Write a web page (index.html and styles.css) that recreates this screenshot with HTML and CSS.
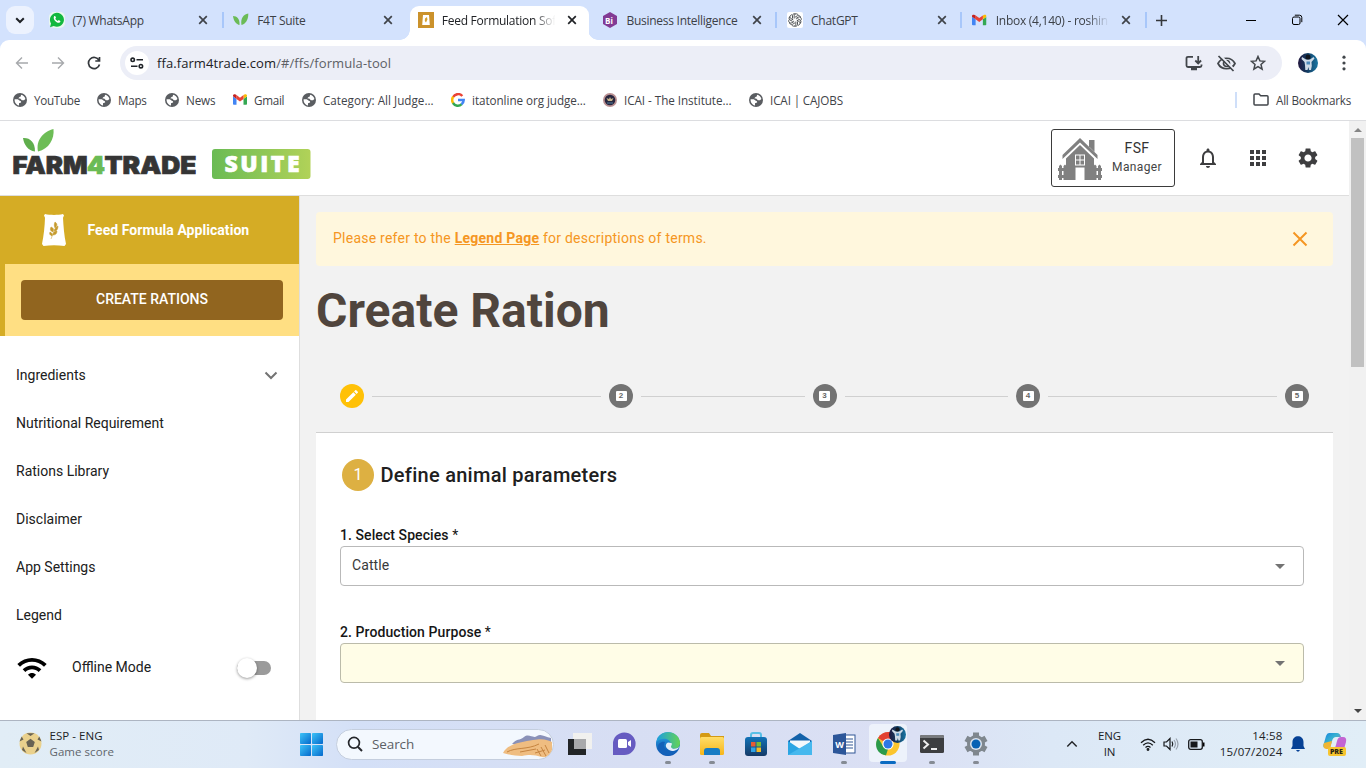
FILE: index.html
```html
<!DOCTYPE html>
<html lang="en">
<head>
<meta charset="utf-8">
<title>Feed Formulation Software</title>
<link rel="stylesheet" href="styles.css">
</head>
<body>
<svg class="defs" aria-hidden="true">
  <defs>
    <symbol id="x" viewBox="0 0 10 10"><path d="M1.200 1.200l7.600 7.600M8.800 1.200L1.200 8.800" fill="none" stroke="currentColor" stroke-width="1.700"/></symbol>
    <symbol id="globe" viewBox="0 0 14 14"><circle cx="7" cy="7" r="7" fill="#5a5d61"/><path d="M1.600 6.300h3.200l2 1.500c1 .2 1.500.8 1.300 1.700L6 10.300v2.200C3.200 12 1.400 9.500 1.600 6.300zM8 1.700c2.300.4 4 2 4.400 4.300L11 7.300H8.800L7.500 5.800 5.300 5.200 6.500 4l1.300-.5z" fill="#fff"/></symbol>
    <symbol id="gmail" viewBox="0 0 16 12"><path d="M1.200 12H4V5.300L0 2.300v8.500C0 11.500.5 12 1.200 12z" fill="#4285f4"/><path d="M12 12h2.800c.7 0 1.200-.5 1.200-1.200V2.300l-4 3z" fill="#34a853"/><path d="M12 .9v4.400l4-3v-.6C16 .2 14.300-.5 13.100.4z" fill="#fbbc04"/><path d="M4 5.300V.9l4 3 4-3v4.400l-4 3z" fill="#ea4335"/><path d="M0 1.700v.6l4 3V.9L2.900.4C1.700-.5 0 .2 0 1.700z" fill="#c5221f"/></symbol>
    <symbol id="wheatbag" viewBox="0 0 24 32"><path d="M3 0c5 1.200 13 1.200 18 0l1 1.500-1 2.200c.4 8 1.200 18 3 26.300l-1.500 2c-7-.9-14-.9-21 0L0 30C1.800 21.700 2.700 12 3 3.700L2 1.500z" fill="#fff"/></symbol>
    <linearGradient id="gSuite"><stop offset="0" stop-color="#6abb54"/><stop offset="1" stop-color="#b1d258"/></linearGradient>
    <linearGradient id="gWin" x2="1" y2="1"><stop offset="0" stop-color="#3cc3f8"/><stop offset="1" stop-color="#0569cc"/></linearGradient>
    <linearGradient id="gStore" x2="0" y2="1"><stop offset="0" stop-color="#1273b8"/><stop offset="1" stop-color="#153a67"/></linearGradient>
    <linearGradient id="gEdge" x2="0" y2="1"><stop offset="0" stop-color="#2aa7e5"/><stop offset="1" stop-color="#0c4fae"/></linearGradient>
    <linearGradient id="gEdgeTop"><stop offset="0" stop-color="#1b9de2"/><stop offset="1" stop-color="#64d455"/></linearGradient>
    <linearGradient id="gFolder" x2="0" y2="1"><stop offset="0" stop-color="#ffdd68"/><stop offset="1" stop-color="#f6b519"/></linearGradient>
    <linearGradient id="gCop" x2="1" y2="1"><stop offset="0" stop-color="#1783e0"/><stop offset=".45" stop-color="#38b3d0"/><stop offset="1" stop-color="#e45ba0"/></linearGradient>
    <linearGradient id="gAv"><stop offset="0" stop-color="#23183f"/><stop offset=".45" stop-color="#123a60"/><stop offset="1" stop-color="#1b77a4"/></linearGradient>
    <symbol id="avatar" viewBox="0 0 20 20"><circle cx="10" cy="10" r="10" fill="url(#gAv)"/><path d="M4 4l4 2.500h4L15.500 4l1 1.500L13.500 9l.3 4-.8 4h-2l-.5-3-1 3H7.300L7 12 6.500 9 3.500 6z" fill="#cdd9e6"/><circle cx="10" cy="4" r="2.500" fill="#11151d"/><path d="M8.500 8.500h3.500v3H8.500z" fill="#4d8abb"/></symbol>
  </defs>
</svg>

<div class="tabstrip">
  <div class="tab-search"><svg width="10" height="7" viewBox="0 0 10 7"><path d="M1.200 1.200L5 5l3.800-3.800" fill="none" stroke="#1f2226" stroke-width="2"/></svg></div>
  <div class="tabs">
    <div class="tab sep">
      <svg class="fav" viewBox="0 0 16 16"><rect width="16" height="16" rx="5" fill="#e9f8ef"/><path d="M1 15.200l1-3.700A7 7 0 1 1 4.700 14z" fill="#12b83f"/><path d="M5 4.500c.7-.8 1.300-.5 1.500.1l.5 1.200-.7 1c.6 1.100 1.400 1.700 2.500 2.200l.9-.9 1.600.8c.4.300-.2 1.700-1.300 1.900C7.500 11.100 3.700 7.500 5 4.500z" fill="#fff"/></svg>
      <span class="tab-t">(7) WhatsApp</span><svg class="tx"><use href="#x"/></svg>
    </div>
    <div class="tab">
      <svg class="fav" viewBox="0 0 16 16"><path d="M0 4c4 0 7 3 6.500 9C3.500 12.500.5 9 0 4z" fill="#6bbb57"/><path d="M15.300 1.500c-5 1-8 5-6.800 11.500 4-1 7-5.500 6.800-11.500z" fill="#6bbb57"/></svg>
      <span class="tab-t">F4T Suite</span><svg class="tx"><use href="#x"/></svg>
    </div>
    <div class="tab active">
      <svg class="fav" viewBox="0 0 16 16"><rect width="16" height="16" fill="#cb922b"/><path d="M5 3h6l.8 10H4.200z" fill="#fff"/><path d="M9 5l.4 2.500L8 10.500 6.800 9 7 6.500z" fill="#d4a030"/></svg>
      <span class="tab-t fade">Feed Formulation Sof</span><svg class="tx"><use href="#x"/></svg>
    </div>
    <div class="tab sep">
      <svg class="fav" viewBox="0 0 16 16"><path d="M8 0l7 4v8l-7 4-7-4V4z" fill="#823a94"/><text x="3" y="11.500" class="bi">Bi</text></svg>
      <span class="tab-t">Business Intelligence</span><svg class="tx"><use href="#x"/></svg>
    </div>
    <div class="tab sep">
      <svg class="fav" viewBox="0 0 16 16"><rect width="16" height="16" rx="2" fill="#fff"/><g fill="none" stroke="#33373b" stroke-width=".8"><g id="k"><path d="M7.200 6.500V3.800C7.200 1.400 10.300 1.200 11.200 3M8 5.200l2.500-1.500C12 3 13.500 4 13.500 5.500"/></g><use href="#k" transform="rotate(60 8 8)"/><use href="#k" transform="rotate(120 8 8)"/><use href="#k" transform="rotate(180 8 8)"/><use href="#k" transform="rotate(240 8 8)"/><use href="#k" transform="rotate(300 8 8)"/></g></svg>
      <span class="tab-t">ChatGPT</span><svg class="tx"><use href="#x"/></svg>
    </div>
    <div class="tab sep">
      <svg class="fav"><use href="#gmail" x="0" y="2.500" width="14.500" height="11"/></svg>
      <span class="tab-t fade">Inbox (4,140) - roshin</span><svg class="tx"><use href="#x"/></svg>
    </div>
  </div>
  <svg class="newtab" viewBox="0 0 11 11"><path d="M5.500 0v11M0 5.500h11" stroke="#34373b" stroke-width="1.600"/></svg>
  <div class="winctl">
    <svg width="12" height="12"><path d="M1 6.500h10" stroke="#000"/></svg>
    <svg width="12" height="12" fill="none" stroke="#000"><rect x="1.500" y="3" width="7.500" height="7.500" rx="1.500"/><path d="M3.800 1.200h4.700q2.300 0 2.300 2.300v4.700"/></svg>
    <svg width="12" height="12"><path d="M1 1l10 10M11 1L1 11" stroke="#000" stroke-width="1.200"/></svg>
  </div>
</div>

<div class="toolbar-bg"><div class="toolbar">
  <svg class="nav dim" viewBox="0 0 14 14"><path d="M13 7H2M7 1.500L1.500 7 7 12.500"/></svg>
  <svg class="nav dim" viewBox="0 0 14 14"><path d="M1 7h11M7 1.500L12.500 7 7 12.500"/></svg>
  <svg class="nav" viewBox="0 0 14 14"><path d="M12 4.300A5.600 5.600 0 1 0 12.500 8.500M12.500 1v4H8.300"/></svg>
  <div class="omnibox">
    <div class="site"><svg width="14" height="12" viewBox="0 0 14 12" fill="none" stroke="#1f2328" stroke-width="1.600"><circle cx="2.700" cy="2.800" r="1.700"/><path d="M6.500 2.800H13M1 9.200h6.500"/><circle cx="10.900" cy="9.200" r="1.700"/></svg></div>
    <span class="url">ffa.farm4trade.com<i>/#/ffs/formula-tool</i></span>
    <div class="omni-icons">
      <svg width="18" height="16" viewBox="0 0 18 16" fill="none" stroke="#42464b" stroke-width="1.800"><path d="M8 1.800H3Q1.500 1.800 1.500 3.300v7.200Q1.500 12 3 12h12q1.500 0 1.500-1.500V9.500M13.200 1v7M10.300 5.500l2.900 2.900 2.900-2.900"/><path d="M6 14h6" stroke-width="2.500"/></svg>
      <svg width="19" height="17" viewBox="0 0 19 17" fill="none" stroke="#42464b" stroke-width="1.700"><path d="M1 8.500C4.500 1.500 14.500 1.500 18 8.500 14.500 15.500 4.500 15.500 1 8.500z"/><circle cx="9.500" cy="8.500" r="3"/><path d="M3.500.5l13.500 14" stroke="#eceef7" stroke-width="2"/><path d="M1.500 1l15 15"/></svg>
      <svg width="16" height="16" viewBox="0 0 16 16"><path d="M8 1.500l1.900 4.400 4.700.4-3.600 3.100 1.100 4.700L8 11.600l-4.100 2.500L5 9.400 1.400 6.300l4.700-.4z" fill="none" stroke="#42464b" stroke-width="1.500"/></svg>
    </div>
  </div>
  <svg class="avatar"><use href="#avatar"/></svg>
  <svg class="kebab" viewBox="0 0 4 16" fill="#42464b"><circle cx="2" cy="2.200" r="1.600"/><circle cx="2" cy="8" r="1.600"/><circle cx="2" cy="13.800" r="1.600"/></svg>
</div></div>

<div class="bookmarks">
  <span class="bm b1"><svg><use href="#globe"/></svg><b>YouTube</b></span>
  <span class="bm b2"><svg><use href="#globe"/></svg><b>Maps</b></span>
  <span class="bm b3"><svg><use href="#globe"/></svg><b>News</b></span>
  <span class="bm b4"><svg><use href="#gmail"/></svg><b>Gmail</b></span>
  <span class="bm b5"><svg><use href="#globe"/></svg><b>Category: All Judge...</b></span>
  <span class="bm b6"><svg viewBox="0 0 14 14" fill="none" stroke-width="2.500"><path d="M2.100 4A5.700 5.700 0 0 1 11.300 3" stroke="#ea4335"/><path d="M2.200 3.800a5.700 5.700 0 0 0 0 6.400" stroke="#fbbc05"/><path d="M2 10a5.700 5.700 0 0 0 8.700 1.200" stroke="#34a853"/><path d="M10.500 11.300A5.500 5.500 0 0 0 12.700 7H7" stroke="#4285f4"/></svg><b>itatonline org judge...</b></span>
  <span class="bm b7"><svg viewBox="0 0 14 14"><circle cx="7" cy="7" r="7" fill="#b98f91"/><circle cx="7" cy="7" r="5.300" fill="#27263e"/><path d="M3.500 5L6 6l1-2 1 2 2.500-1L9 8H5z" fill="#c9b58b"/><path d="M4 10h6" stroke="#537c9c"/></svg><b>ICAI - The Institute...</b></span>
  <span class="bm b8"><svg><use href="#globe"/></svg><b>ICAI | CAJOBS</b></span>
  <span class="bm all"><svg viewBox="0 0 16 13"><path d="M1 11V2q0-1 1-1h4l1.700 1.700H14q1 0 1 1V11q0 1-1 1H2q-1 0-1-1z" fill="none" stroke="#42464b" stroke-width="1.500"/></svg><b>All Bookmarks</b></span>
</div>

<div class="viewport">
  <div class="page">
    <header class="appbar">
      <svg class="logo" width="300" height="56" viewBox="0 0 300 56">
        <path d="M11 10c7-.5 12 4 12 13.500C16 22.500 12 17 11 10z" fill="#5fae4c"/><path d="M41.500 1c-10 2.500-18 11-15.500 22.500C37 21 42.500 11 41.500 1z" fill="#6dbd56"/>
        <text class="brand" x="0.500" y="46" textLength="75" lengthAdjust="spacingAndGlyphs">FARM</text>
        <text class="brand four" x="75" y="46" textLength="18" lengthAdjust="spacingAndGlyphs">4</text>
        <text class="brand" x="92.500" y="46" textLength="92" lengthAdjust="spacingAndGlyphs">TRADE</text>
        <rect x="200" y="21" width="98.500" height="30" rx="3" fill="url(#gSuite)"/>
        <text class="suite" x="212.500" y="43.500" textLength="75" lengthAdjust="spacing">SUITE</text>
      </svg>
      <div class="account">
        <svg width="44" height="43" viewBox="0 0 44 43" fill="#808080"><path d="M22 0l17.500 17v4L22 4.500 4.500 21v-4z"/><path d="M31 2h5.500v12L31 8.500z"/><path d="M22 7l14 13.500V42H26.500V29.500h-9V42H8V20.500z"/><path d="M17 16.500h10v11H17z" fill="#fff"/><path d="M18 17.500h3.500v4H18zM22.500 17.500H26v4h-3.500zM18 22.500h3.500v4H18zM22.500 22.500H26v4h-3.500z"/><path d="M0 30h9v3H0zM0 37h9v3H0zM35 30h9v3h-9zM35 37h9v3h-9zM1 28l1.500-1.500L4 28v14H1zM5.500 28L7 26.500 8.500 28v14h-3zM35.500 28l1.500-1.500 1.500 1.500v14h-3zM40 28l1.500-1.500L43 28v14h-3z"/></svg>
        <div class="who"><strong>FSF</strong><span>Manager</span></div>
      </div>
      <div class="actions">
        <svg viewBox="0 0 24 24"><path d="M12 22c1.100 0 2-.9 2-2h-4c0 1.100.9 2 2 2zm6-6v-5c0-3.070-1.630-5.640-4.500-6.320V4c0-.83-.67-1.500-1.500-1.500s-1.500.67-1.500 1.500v.68C7.640 5.360 6 7.920 6 11v5l-2 2v1h16v-1l-2-2zm-2 1H8v-6c0-2.480 1.510-4.500 4-4.500s4 2.020 4 4.500v6z"/></svg>
        <svg viewBox="0 0 24 24"><path d="M4 8h4V4H4v4zm6 12h4v-4h-4v4zm-6 0h4v-4H4v4zm0-6h4v-4H4v4zm6 0h4v-4h-4v4zm6-10v4h4V4h-4zm-6 4h4V4h-4v4zm6 6h4v-4h-4v4zm0 6h4v-4h-4v4z"/></svg>
        <svg viewBox="0 0 24 24"><path d="M19.140 12.940c.04-.3.060-.61.060-.94 0-.32-.02-.64-.07-.94l2.030-1.580c.18-.14.230-.41.120-.61l-1.920-3.320c-.12-.22-.37-.29-.59-.22l-2.390.96c-.5-.38-1.030-.7-1.620-.94l-.36-2.540c-.04-.24-.24-.41-.48-.41h-3.840c-.24 0-.43.170-.47.410l-.36 2.540c-.59.240-1.130.57-1.620.94l-2.390-.96c-.22-.08-.47 0-.59.220L2.740 8.870c-.12.210-.08.470.12.610l2.030 1.580c-.05.300-.09.630-.09.940s.02.640.07.940l-2.030 1.580c-.18.140-.23.410-.12.610l1.920 3.320c.12.220.37.290.59.220l2.390-.96c.5.380 1.030.7 1.620.94l.36 2.540c.05.240.24.410.48.410h3.840c.24 0 .44-.17.470-.41l.36-2.540c.59-.24 1.130-.56 1.620-.94l2.390.96c.22.080.47 0 .59-.22l1.920-3.320c.12-.22.070-.47-.12-.61l-2.010-1.580zM12 15.600c-1.980 0-3.600-1.620-3.600-3.600s1.620-3.600 3.600-3.600 3.600 1.620 3.600 3.600-1.620 3.600-3.600 3.600z"/></svg>
      </div>
    </header>
    <div class="main">
      <nav class="side">
        <div class="app-title"><svg width="24" height="32" viewBox="0 0 24 32"><use href="#wheatbag"/><path d="M9 25l4-10M13 8c3 2 2 4 0 6-1-2-1-4 0-6zM16 12c0 3-1 5-3.500 5 0-2 1-4 3.500-5zM15 17c0 3-2 4-4 4 0-2 1-4 4-4zM9 13c3 1 3 3 2 5-3-1-3-3-2-5zM8 18c2 1 3 2 2 4-2-1-3-2-2-4z" fill="#c59a2d" stroke="#c59a2d" stroke-width=".5"/></svg><span>Feed Formula Application</span></div>
        <div class="cta"><div class="btn">CREATE RATIONS</div></div>
        <ul class="menu">
          <li>Ingredients<svg width="14" height="9" viewBox="0 0 14 9"><path d="M1.500 1.500L7 7l5.500-5.500" fill="none" stroke="#737373" stroke-width="2"/></svg></li>
          <li>Nutritional Requirement</li><li>Rations Library</li><li>Disclaimer</li><li>App Settings</li><li>Legend</li>
        </ul>
        <div class="offline">
          <svg width="32" height="32" viewBox="0 0 24 24"><path d="M1 9l2 2c4.970-4.970 13.030-4.970 18 0l2-2C16.930 2.930 7.080 2.930 1 9zm8 8l3 3 3-3c-1.650-1.660-4.340-1.660-6 0zm-4-4l2 2c2.760-2.760 7.240-2.760 10 0l2-2C15.140 9.140 8.870 9.140 5 13z"/></svg>
          <span>Offline Mode</span><div class="toggle"></div>
        </div>
      </nav>
      <section class="content">
        <div class="alert"><p>Please refer to the <a>Legend Page</a> for descriptions of terms.</p><svg width="16" height="16" viewBox="0 0 16 16"><path d="M1.500 1.500l13 13M14.500 1.500l-13 13" stroke="#f59622" stroke-width="2"/></svg></div>
        <h1>Create Ration</h1>
        <div class="stepper">
          <span class="step now"><svg width="16" height="16" viewBox="0 0 24 24"><path d="M3 17.250V21h3.750L17.810 9.940l-3.750-3.750L3 17.250zM20.710 7.040c.39-.39.390-1.020 0-1.410l-2.340-2.340c-.39-.39-1.020-.39-1.410 0l-1.830 1.830 3.750 3.750 1.830-1.830z" fill="#fff"/></svg></span>
          <i class="long"></i>
          <span class="step"><b>2</b></span><i></i>
          <span class="step"><b>3</b></span><i></i>
          <span class="step"><b>4</b></span><i class="long"></i>
          <span class="step"><b>5</b></span>
        </div>
        <div class="card">
          <h2><span>1</span>Define animal parameters</h2>
          <label>1. Select Species <em>*</em></label>
          <div class="select">Cattle<u></u></div>
          <label>2. Production Purpose <em>*</em></label>
          <div class="select empty"><u></u></div>
        </div>
      </section>
    </div>
  </div>
  <div class="scrollbar"><i class="up"></i><div class="thumb"></div><i class="down"></i></div>
</div>

<footer class="taskbar">
  <div class="widget"><svg width="23" height="23" viewBox="0 0 23 23"><circle cx="11.500" cy="11.500" r="11" fill="#ead18d"/><path d="M11.500 6.800l4.300 3.200-1.600 5H8.800L7.200 10zM7.500 1.300h8l-4 2.700zM.5 9.500l2.200-5 1.800 3zM22.500 9.500l-2.200-5-1.800 3zM3 18l1-3.500L7.500 21zM20 18l-1-3.500L15.500 21z" fill="#686253"/></svg><p>ESP - ENG<br><span>Game score</span></p></div>
  <svg class="start" viewBox="0 0 23 23" fill="url(#gWin)"><rect width="11" height="11" rx=".8"/><rect x="12" width="11" height="11" rx=".8"/><rect y="12" width="11" height="11" rx=".8"/><rect x="12" y="12" width="11" height="11" rx=".8"/></svg>
  <div class="search"><svg width="16" height="16" viewBox="0 0 16 16"><circle cx="7" cy="6.800" r="5.400" fill="none" stroke="#25272b" stroke-width="1.700"/><path d="M11 11l4 4" stroke="#25272b" stroke-width="1.900"/></svg><span>Search</span>
    <svg class="art" width="50" height="24" viewBox="0 0 50 24"><path d="M9 10C14 4 16 7 21 3s9 2 13-1 8 1 14 2v8z" fill="#8a91b8"/><path d="M0 19C5 9 20 8 30 6s15 0 19 2v11q-4 5-10 4c-7-2-12-3-20-1-6 0-12-1-19-3z" fill="#efbd81"/><path d="M4 18c9-5 20-2 32-8M17 18l16-3M34 15l4 7M38 13l5 9M42 11l4 8M32 19l10-3" fill="none" stroke="#c58440" stroke-width="1"/></svg>
  </div>
  <div class="apps">
    <span><svg viewBox="0 0 24 24"><rect x="5" y="1" width="19" height="16" fill="#f1f1ef"/><rect y="7" width="18" height="16" fill="#222527"/><rect x="6" y="7" width="12" height="10" fill="#a8a9ab"/></svg></span>
    <span><svg viewBox="0 0 24 24"><path d="M1 23V12a11.300 11.300 0 1 1 11 11z" fill="#665bc1"/><rect x="6" y="7" width="9" height="9" rx="1.500" fill="#fff"/><path d="M16 10l3-2v7l-3-2z" fill="#fff"/></svg></span>
    <span class="run"><svg viewBox="0 0 24 24"><circle cx="12" cy="12" r="12" fill="url(#gEdge)"/><path d="M.5 10C2-3 22-3 24 10c.5 6-5 8-9 6-2-1 0-2 0-4C14 6 5 5 .5 10z" fill="url(#gEdgeTop)"/><path d="M9 10c-4 7 4 12 12 9-4 6-15 7-19-2-1-5 3-8 7-7z" fill="#1361b9"/><path d="M15 11c2 0 0 3 0 4 1 3 7 2 9-1-1 3-5 5-8 5-5-1-8-5-5-8q1-1 4 0z" fill="#e2edf9"/></svg></span>
    <span class="run"><svg viewBox="0 0 24 24"><path d="M0 3q0-2 2-2h7l2 3h13v5H0z" fill="#d49a14"/><rect y="5" width="24" height="18" rx="1.500" fill="url(#gFolder)"/><path d="M4 23v-4q0-3 3-3h10q3 0 3 3v4z" fill="#177cc4"/></svg></span>
    <span><svg viewBox="0 0 24 24"><path d="M7 7V3q0-2 2-2h6q2 0 2 2v4" fill="none" stroke="#58bfe6" stroke-width="2"/><rect x="1" y="5" width="22" height="19" rx="3" fill="url(#gStore)"/><path d="M7 10h4.500v4.500H7z" fill="#e95b34"/><path d="M12.500 10H17v4.500h-4.500z" fill="#79ba37"/><path d="M7 15.500h4.500V20H7z" fill="#30a3e6"/><path d="M12.500 15.500H17V20h-4.500z" fill="#f5bb26"/></svg></span>
    <span><svg viewBox="0 0 24 24"><path d="M0 9L12 1l12 8v3H0z" fill="#1361a9"/><path d="M2 8.500h20V16H2z" fill="#f3f8fc"/><path d="M0 9l12 8 12-8v14H0z" fill="#2ba5e3"/><path d="M0 23L24 9v14z" fill="#46b8ee"/></svg></span>
    <span class="run"><svg viewBox="0 0 24 24"><rect x="12" y="3" width="11" height="18" fill="#fff" stroke="#315695"/><path d="M14 7h7M14 10h7M14 13h7M14 16h7" stroke="#315695"/><path d="M1 3l13-2v22L1 21z" fill="#2c5699"/><text x="3.200" y="16" class="word">W</text></svg></span>
    <span class="run on"><svg viewBox="0 0 24 24"><circle cx="12" cy="12" r="11.500" fill="#fbc52d"/><path d="M12 12L2 6C7-2.500 19-1.500 22.500 7z" fill="#e34133"/><path d="M2 6l5.500 9 4.500 2-2 6.300C0 22-2 12 2 6z" fill="#2a9a4b"/><circle cx="12" cy="12" r="5.600" fill="#fff"/><circle cx="12" cy="12" r="4.500" fill="#2c78e5"/></svg><svg class="badge"><use href="#avatar"/></svg></span>
    <span class="run"><svg viewBox="0 0 24 24"><rect y="3" width="24" height="18" rx="1.500" fill="#3d3e40"/><path d="M0 6V4.500Q0 3 1.500 3h21Q24 3 24 4.500V6z" fill="#797b7e"/><path d="M3.500 8.500L8 12.500l-4.500 4M11 17h6" fill="none" stroke="#ededed" stroke-width="2"/></svg></span>
    <span class="run"><svg viewBox="0 0 24 24"><circle cx="12" cy="12" r="9" fill="#7f878e"/><path d="M12 .5v23M2 6.300l20 11.400M2 17.700L22 6.300" stroke="#7f878e" stroke-width="6"/><circle cx="12" cy="12" r="6" fill="#dce4ef"/><circle cx="12" cy="12" r="4.500" fill="#0862b4"/></svg></span>
  </div>
  <div class="tray">
    <svg class="up-arrow" width="12" height="8" viewBox="0 0 12 8"><path d="M1.300 6.500L6 1.800l4.700 4.700" fill="none" stroke="#202225" stroke-width="1.400"/></svg>
    <p class="lang">ENG<br>IN</p>
    <svg class="net" width="16" height="13" viewBox="0 0 16 13" fill="none" stroke="#17191c" stroke-width="1.300"><path d="M1 4.800q7-7 14 0M3.200 7.200q4.800-4.700 9.600 0M5.500 9.500q2.500-2.300 5 0"/><circle cx="8" cy="11.500" r=".8"/></svg>
    <svg class="vol" width="16" height="14" viewBox="0 0 16 14" fill="none" stroke="#17191c" stroke-width="1.200"><path d="M1 5h2.500L7 1.500v11L3.500 9H1zM9 4.500q1.500 2.500 0 5"/><path d="M11 3q3 4 0 8M13 1.500q4 5.500 0 11" stroke="#9aa2ad"/></svg>
    <svg class="bat" width="17" height="11" viewBox="0 0 17 11"><rect x=".7" y=".7" width="13.600" height="9.600" rx="2" fill="none" stroke="#17191c" stroke-width="1.300"/><rect x="2.500" y="2.500" width="7" height="6" fill="#17191c"/><path d="M15 3.500h1.500v4H15z"/></svg>
    <p class="clock">14:58<br>15/07/2024</p>
    <svg class="bell" width="14" height="16" viewBox="0 0 14 16" fill="#064195"><path d="M0 13l1.500-3V6C1.500-1.800 12.500-1.800 12.500 6v4l1.500 3zM5 14h4q-2 3.500-4 0z"/></svg>
    <svg class="copilot" width="24" height="24" viewBox="0 0 24 24"><path d="M6 1h8q3 0 4 4h-5q-3 0-4 4l-2 7H3q-4 0-2-5l2-7q1-3 3-3z" fill="url(#gCop)"/><path d="M18 5h2q4 0 3 5l-2 7H9q3 0 4-4l1-4q1-4 4-4z" fill="#c365d3"/><path d="M1 11l8-2-2 8H3q-4-1-2-6z" fill="#f1b633"/><rect x="5" y="15" width="18" height="9" rx="2" fill="#f7c52f"/><text class="pre" x="7" y="22">PRE</text></svg>
  </div>
</footer>
</body>
</html>
```
FILE: styles.css
```css
* { box-sizing: border-box; }
body { margin: 0; width: 1366px; height: 768px; overflow: hidden; display: flex; flex-direction: column; background: #fff; font-family: "Open Sans", "Noto Sans", sans-serif; font-size: 12px; }
p, h1, h2, ul { margin: 0; padding: 0; }
svg { display: block; flex: none; }
.defs { position: absolute; width: 0; height: 0; }

/* Tab strip */
.tabstrip { height: 40px; flex: none; display: flex; background: #d3e2fd; padding-left: 6px; }
.tab-search { width: 28px; height: 28px; margin: 6px 6.500px 0 0; border-radius: 9px; background: #ecf2fe; display: flex; align-items: center; justify-content: center; }
.tabs { display: flex; width: 1108px; }
.tab { width: 184.650px; height: 40px; flex: none; display: flex; align-items: center; padding-left: 8px; position: relative; color: #3c4046; }
.fav { width: 16px; height: 16px; margin-right: 8px; }
.tab-t { width: 117.500px; white-space: nowrap; letter-spacing: -.26px; margin-right: 8px; }
.fade { -webkit-mask-image: linear-gradient(90deg, #000 78%, transparent 97%); mask-image: linear-gradient(90deg, #000 78%, transparent 97%); }
.tx { width: 10px; height: 10px; color: #3f4349; }
.sep::after { content: ""; position: absolute; left: 181px; top: 12px; width: 2px; height: 16px; background: #a8c7fa; }
.active { color: #202226; }
.active::before { content: ""; position: absolute; z-index: 0; left: 0; top: 6px; width: 179px; height: 34px; background: #fff; border-radius: 9px 9px 0 0; }
.active::after { content: ""; position: absolute; left: -10px; right: -4px; bottom: 0; height: 10px; background: radial-gradient(circle at 0 0, transparent 9.500px, #fff 10px) left/10px 10px no-repeat, radial-gradient(circle at 100% 0, transparent 9.500px, #fff 10px) right/10px 10px no-repeat; }
.active > * { position: relative; z-index: 1; }
.active .tx { color: #202226; }
.bi { font: 700 8px "Open Sans", sans-serif; fill: #fff; }
.newtab { width: 11px; height: 11px; margin: 14.500px 0 0 7px; }
.winctl { margin: 14px 17px 0 auto; display: flex; gap: 34px; }

/* Toolbar */
.toolbar-bg { background: #d3e2fd; flex: none; }
.toolbar { height: 46px; background: #fff; border-radius: 9px 9px 0 0; display: flex; align-items: center; padding-left: 15px; }
.nav { width: 14px; height: 14px; margin-right: 22px; fill: none; stroke: #34383c; stroke-width: 1.700; }
.nav.dim { stroke: #a7a9ac; stroke-width: 1.400; }
.omnibox { width: 1162px; height: 34px; margin-left: -3px; border-radius: 17px; background: #eceef7; display: flex; align-items: center; padding-left: 5px; }
.site { width: 24px; height: 24px; border-radius: 50%; background: #fff; display: flex; align-items: center; justify-content: center; }
.url { margin-left: 8px; font-size: 13px; color: #202124; letter-spacing: .08px; }
.url i { font-style: normal; color: #5d6065; }
.omni-icons { display: flex; align-items: center; gap: 14px; margin: 0 16px 0 auto; }
.avatar { width: 20px; height: 20px; margin-left: 16px; }
.kebab { width: 4px; height: 16px; margin-left: 24px; }

/* Bookmarks */
.bookmarks { height: 35px; flex: none; display: flex; align-items: center; padding: 0 15px 7px 13px; border-bottom: 1px solid #dcdde0; color: #3f4348; }
.bm { display: flex; align-items: center; gap: 7px; white-space: nowrap; font-size: 11.700px; letter-spacing: -.3px; }
.bm b { font-weight: 400; }
.bm svg { width: 14px; height: 14px; }
.b1 { width: 84px; } .b2 { width: 68px; } .b3 { width: 68px; letter-spacing: -.15px; } .b4 { width: 69px; }
.b5 { width: 149px; letter-spacing: 0; } .b6 { width: 152px; letter-spacing: -.06px; } .b7 { width: 146px; letter-spacing: -.05px; } .b8 { letter-spacing: -.13px; }
.b4 svg { height: 11px; }
.all { margin-left: auto; padding-left: 16px; border-left: 2px solid #cfdff9; height: 16px; letter-spacing: -.22px; }
.bm.all svg { width: 16px; height: 13px; }

/* Page */
.viewport { flex: 1; min-height: 0; display: flex; font-family: Roboto, sans-serif; background: #f2f2f2; }
.page { width: 1349px; display: flex; flex-direction: column; }
.appbar { height: 75px; flex: none; background: #fff; border-bottom: 1px solid #dedede; display: flex; padding-left: 12px; }
.logo { margin-top: 7px; }
.brand { font: 900 24px Inter, sans-serif; fill: #353535; stroke: #353535; stroke-width: .7; }
.brand.four { fill: #6bbb55; stroke: #6bbb55; }
.suite { font: 800 23px "Open Sans", sans-serif; fill: #fff; stroke: #fff; stroke-width: .6; }
.account { width: 124px; height: 58px; margin: 8px 0 0 auto; border: 1px solid #3b3b3b; border-radius: 3px; display: flex; padding: 8px 0 0 6px; }
.who { flex: 1; text-align: center; font-size: 12px; color: #444; line-height: 19px; padding: 1px 2px 0 0; letter-spacing: .35px; }
.who strong { display: block; font-weight: 400; font-size: 14px; color: #333; }
.actions { display: flex; gap: 26px; margin: 25px 29px 0 21px; }
.actions svg { width: 24px; height: 24px; fill: #3e3e40; }
.main { flex: 1; min-height: 0; display: flex; overflow: hidden; }
.side { width: 300px; flex: none; background: #fff; border-right: 1px solid #dedede; font-size: 14px; color: #202020; }
.app-title { height: 68px; background: #d5ac25; display: flex; align-items: center; padding-left: 42px; gap: 21.500px; color: #fff; font-weight: 700; font-size: 14px; letter-spacing: .05px; }
.cta { height: 72px; background: #ffdf83; border-left: 5px solid #d5ac25; padding: 16px; }
.btn { height: 40px; border-radius: 4px; background: #91651f; color: #fff; font-weight: 500; text-align: center; line-height: 39px; font-size: 14px; }
.menu { list-style: none; padding-top: 15px; }
.menu li { height: 48px; line-height: 48px; padding: 0 21px 0 16px; display: flex; align-items: center; justify-content: space-between; }
.offline { display: flex; align-items: center; height: 58px; padding-left: 16px; }
.offline span { width: 165px; margin-left: 24px; padding-bottom: 3px; }
.toggle { width: 34px; height: 14px; border-radius: 7px; background: #9b9b9b; position: relative; }
.toggle::before { content: ""; position: absolute; left: 0; top: -3px; width: 20px; height: 20px; border-radius: 50%; background: #fff; box-shadow: 0 1px 3px rgba(0,0,0,.4); }
.content { flex: 1; padding: 16px 16px 0; display: flex; flex-direction: column; }
.alert { height: 54px; flex: none; border-radius: 4px; background: #fff7dd; color: #f59622; font-size: 14px; display: flex; align-items: center; justify-content: space-between; padding: 0 25px 0 17px; letter-spacing: .24px; }
.alert p { padding-bottom: 2px; }
.alert a { font-weight: 700; text-decoration: underline; }
h1 { font-size: 48px; line-height: 56px; font-weight: 700; color: #50453d; margin-top: 17px; letter-spacing: 0; }
.stepper { height: 24px; margin: 45px 0 24px; padding: 0 24px; display: flex; align-items: center; gap: 8px; }
.stepper i { flex: 163.500; height: 1px; background: #d0d0d0; }
.stepper .long { flex: 229; }
.step { width: 24px; height: 24px; border-radius: 50%; background: #737373; display: flex; align-items: center; justify-content: center; }
.step.now { background: #ffc107; }
.step b { width: 11px; height: 10px; border-radius: 1px; background: #fff; color: #666; font: 700 8px/10px "Liberation Sans", sans-serif; text-align: center; }
.card { flex: 1; background: #fff; border-top: 1px solid #d0d0d0; padding: 26px 29px 0 24px; color: #202020; }
h2 { display: flex; align-items: center; gap: 6.500px; height: 32px; padding-left: 2px; font-size: 20px; font-weight: 500; letter-spacing: .27px; margin-bottom: 36px; }
h2 span { width: 32px; height: 32px; border-radius: 50%; background: #ddb042; color: #fff; font-size: 16px; font-weight: 400; text-align: center; line-height: 31px; letter-spacing: 0; }
label { display: block; height: 19px; line-height: 16px; font-size: 14px; font-weight: 500; color: #161616; letter-spacing: .08px; }
label em { font-style: normal; font-weight: 400; }
.select { height: 40px; border: 1px solid #b9b9b9; border-radius: 4px; display: flex; align-items: center; justify-content: space-between; padding: 0 18px 2px 11px; font-size: 14px; color: #3a3a3a; letter-spacing: .1px; margin-bottom: 38px; }
.empty { background: #fffde7; border-color: #bbbbaa; }
.select u { width: 0; height: 0; margin: 3px 0 0 auto; border: 5px solid transparent; border-top-color: #737373; border-bottom: 0; }
.scrollbar { width: 17px; background: #f1f1f1; display: flex; flex-direction: column; align-items: center; }
.scrollbar i { border: 4px solid transparent; }
.scrollbar .up { border-bottom: 4px solid #858585; border-top: 0; margin: 7px 0 6px; }
.thumb { width: 13px; height: 229px; background: #c1c1c1; }
.scrollbar .down { border-top: 4px solid #454545; border-bottom: 0; margin: auto 0 7px; }

/* Taskbar */
.taskbar { height: 48px; flex: none; border-top: 1px solid #adb5c2; background: linear-gradient(90deg, #e1edf6 0, #dfeaf7 18%, #d4e0f7 26%, #d7def3 46%, #dbe0f4 67%, #dce8f6 77%, #e1eef7 100%); display: flex; align-items: center; padding-bottom: 1px; color: #202225; font-size: 11.500px; line-height: 16px; letter-spacing: -.1px; }
.widget { width: 279px; display: flex; gap: 7.500px; padding: 0 0 1px 19px; align-items: center; letter-spacing: .05px; }
.widget span { color: #60656b; }
.start { width: 23px; height: 23px; margin-left: 21px; }
.search { width: 218px; height: 31px; margin-left: 13px; border: 1px solid #c4cede; border-radius: 16px; background: #f3f8fe; display: flex; align-items: center; padding-left: 10px; font-size: 13.500px; color: #5c6065; overflow: hidden; }
.search span { margin-left: 9px; }
.art { margin: 3px 0 0 auto; }
.apps { display: flex; margin-left: 3.500px; }
.apps span { width: 44px; height: 40px; display: flex; align-items: center; justify-content: center; position: relative; }
.apps span > svg { width: 24px; height: 24px; }
.run::after { content: ""; position: absolute; left: 19px; bottom: 0; width: 6px; height: 3px; border-radius: 2px; background: #858b94; }
.on::before { content: ""; position: absolute; left: 3px; top: 0; width: 38px; height: 38px; border-radius: 4px; background: #edf2fb; }
.on > svg { position: relative; }
.on::after { left: 14px; width: 16px; background: #0b6bc2; }
.apps .on .badge { position: absolute; left: 23px; top: 2px; width: 17px; height: 17px; }
.tray { flex: 1; display: flex; align-items: center; padding-left: 68px; }
.lang { width: 28px; margin-left: 18px; text-align: center; }
.net { margin-left: 16px; } .vol { margin-left: 7px; } .bat { margin-left: 9px; }
.clock { width: 78px; text-align: right; letter-spacing: .17px; padding-bottom: 1px; }
.bell { margin-left: 8px; }
.copilot { margin-left: 18px; }
.pre { font: 800 7px "Open Sans", sans-serif; fill: #2c2614; }
.word { font: 700 9px "Open Sans", sans-serif; fill: #fff; }
```
